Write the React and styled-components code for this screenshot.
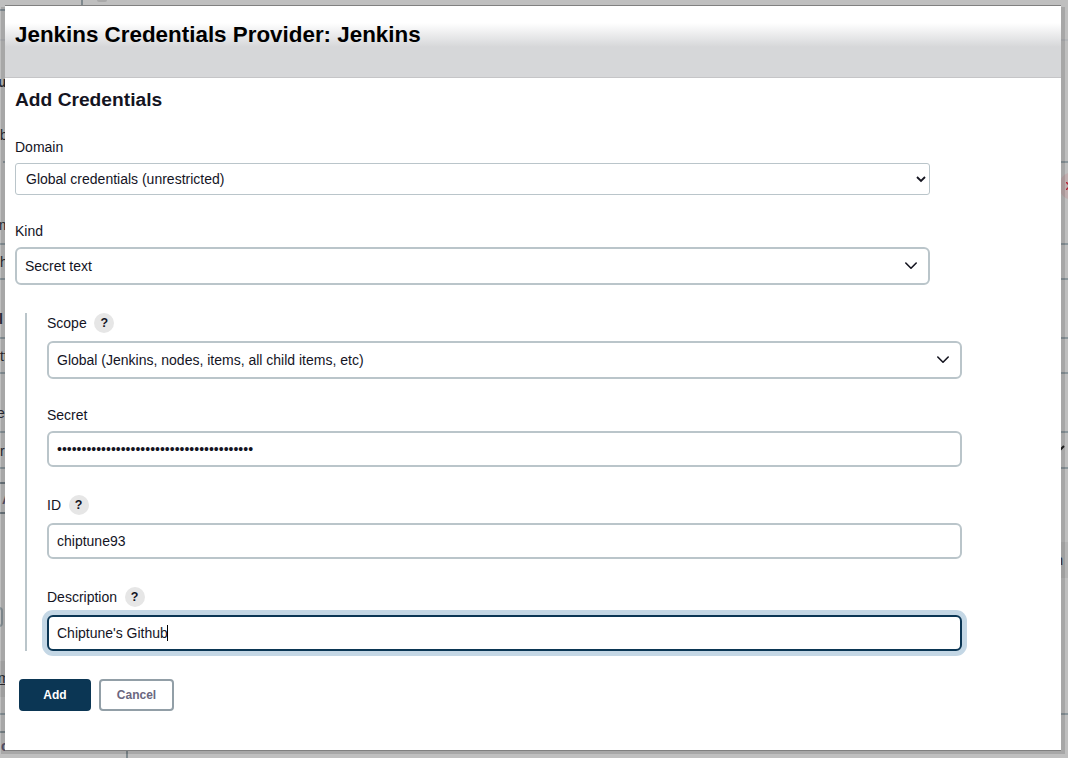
import React from "react";
import styled, { createGlobalStyle } from "styled-components";

const GlobalStyle = createGlobalStyle`
  * { box-sizing: border-box; }
  body {
    margin: 0;
    overflow: hidden;
    background: #bfbfbf;
    color: #14141f;
    font: 14px/20px "Liberation Sans", Arial, sans-serif;
  }
`;

const Screen = styled.div`
  position: relative;
  width: 1068px;
  height: 758px;
  overflow: hidden;
`;

/* Dimmed configuration page behind the dialog */
const Backdrop = styled.div`
  display: flex;
  flex-direction: column;
  height: 100%;
  color: #2b2b33;
`;

const TopStrip = styled.div`
  display: flex;
  align-items: flex-start;
  gap: 14px;
  height: 9px;
  padding-left: 81px;
`;

const TabEdge = styled.span`
  width: 2px;
  height: 9px;
  background: #7f898e;
`;

const TabDot = styled.span`
  width: 10px;
  height: 2px;
  background: #a9a9a9;
  border-radius: 0 0 5px 5px;
`;

const Rule = styled.div`
  flex: none;
  height: 2px;
  margin-left: ${(p) => p.$left || 0}px;
  margin-right: ${(p) => p.$right || 0}px;
  background: ${(p) => p.$color || "#8c979c"};
`;

const Slot = styled.div`
  flex: none;
  display: flex;
  justify-content: space-between;
  height: ${(p) => p.$h}px;
  margin-left: ${(p) => p.$left || 0}px;
  margin-right: ${(p) => p.$right || 0}px;
  background: ${(p) => p.$bg || "transparent"};
`;

const Glyph = styled.span`
  height: 20px;
  margin-top: ${(p) => p.$top}px;
  margin-left: ${(p) => p.$x || 0}px;
  margin-right: ${(p) => p.$r || 0}px;
  color: ${(p) => p.$color || "inherit"};
  font-weight: ${(p) => (p.$bold ? 700 : 400)};
  text-decoration: ${(p) => (p.$underline ? "underline" : "none")};
`;

const ButtonEdge = styled.span`
  width: 8px;
  height: 20px;
  margin: 29px 0 0 -5px;
  border: 2px solid #8c979c;
  border-radius: 4px;
`;

const DeleteDot = styled.span`
  display: flex;
  align-items: center;
  flex: none;
  width: 28px;
  height: 28px;
  margin: 9px -19px 0 0;
  padding-left: 7px;
  border-radius: 50%;
  background: #c1aeaf;
`;

const EdgeIcon = styled.svg`
  display: block;
  flex: none;
  margin-top: ${(p) => p.$top || 0}px;
  margin-right: ${(p) => p.$r || 0}px;
`;

const FooterTab = styled.div`
  width: 128px;
  height: 25px;
  padding: 3px 0 0 1px;
  border-right: 2px solid #7f898e;
  font-weight: 700;
  color: #5a5670;
`;

/* Dialog */
const Shade = styled.div`
  position: absolute;
  left: 1px;
  top: 7px;
  width: 1064px;
  height: 747px;
  background: rgba(0, 0, 0, 0.12);
`;

const Dialog = styled.section`
  position: absolute;
  left: 5px;
  top: 5px;
  width: 1056px;
  height: 746px;
  border: solid #808080;
  border-width: 1px 0;
  background: #fff;
`;

const DialogHeader = styled.header`
  height: 72px;
  padding: 15px 10px 0;
  border-bottom: 1px solid #c5c5c7;
  background: linear-gradient(#fff 0, #fff 17px, #d6d7d9 41px, #d6d7d9 100%);
`;

const DialogTitle = styled.h1`
  margin: 0;
  font-size: 22.4px;
  line-height: 28px;
  color: #000;
`;

const Body = styled.form`
  display: flex;
  flex-direction: column;
  padding: 9px 10px 0;
`;

const SectionTitle = styled.h2`
  margin: 0 0 24px;
  font-size: 19.2px;
  line-height: 26px;
`;

const Label = styled.div`
  display: flex;
  align-items: center;
  gap: 7.6px;
  height: 20px;
  margin-bottom: ${(p) => p.$gap ?? 6}px;
`;

const Help = styled.span`
  width: 20px;
  height: 20px;
  border-radius: 50%;
  background: #e6e6e6;
  font-size: 12.5px;
  font-weight: 700;
  text-align: center;
`;

const Field = styled.div`
  display: flex;
  align-items: center;
  width: 915px;
  height: ${(p) => p.$h}px;
  margin-bottom: ${(p) => p.$after || 0}px;
  padding: 0 8px;
  border: 2px solid ${(p) => (p.$focus ? "#0b3654" : "#bac5ca")};
  border-radius: 6px;
  background: #fff;
  box-shadow: ${(p) => (p.$focus ? "0 0 0 5px #c4d7e5" : "none")};
`;

const SelectField = styled(Field)`
  justify-content: space-between;
  padding-right: 9px;
`;

const NativeSelect = styled(SelectField)`
  padding: 0 3px 0 10px;
  border-width: 1px;
  border-radius: 3px;
`;

const Caret = styled.span`
  width: 1px;
  height: 16px;
  margin-left: -1px;
  background: #000;
`;

const Nested = styled.div`
  display: flex;
  flex-direction: column;
  width: 947px;
  margin-left: 10px;
  padding-left: 20px;
  border-left: 2px solid #bac5ca;
`;

const Actions = styled.div`
  display: flex;
  gap: 8px;
  margin: 28px 0 0 4px;
`;

const Button = styled.button`
  width: ${(p) => p.$w}px;
  height: 32px;
  padding: 0;
  border: 2px solid ${(p) => (p.$primary ? "#0b3654" : "#929fa7")};
  border-radius: 4px;
  background: ${(p) => (p.$primary ? "#0b3654" : "#fff")};
  color: ${(p) => (p.$primary ? "#fff" : "#6b6780")};
  font: 700 12px/16px "Liberation Sans", Arial, sans-serif;
`;

const Chevron = () => (
  <svg width="16" height="16" viewBox="0 0 16 16" fill="none" stroke="#14141f" strokeWidth="1.6" strokeLinecap="round" strokeLinejoin="round">
    <path d="M2.8 5L8 10.2l5.2-5.2" />
  </svg>
);

const NativeChevron = () => (
  <svg width="10" height="8" viewBox="0 0 10 8" fill="none" stroke="#14141f" strokeWidth="1.8">
    <path d="M1 2l4 4 4-4" />
  </svg>
);

function ConfigPage() {
  return (
    <Backdrop aria-hidden="true">
      <TopStrip><TabEdge /><TabDot /></TopStrip>
      <Rule $color="#89939a" $right={68} />
      <Slot $h={28} />
      <Rule $color="#b4b6b9" />
      <Slot $h={35} />
      <Slot $h={40}><Glyph $top={-4} $x={-2} $bold>u</Glyph></Slot>
      <Slot $h={45}><Glyph $top={9} $x={0}>b</Glyph></Slot>
      <Rule $left={3} />
      <Slot $h={40}>
        <span />
        <DeleteDot>
          <svg width="8" height="8" viewBox="0 0 8 8" stroke="#b51f32" strokeWidth="1.5">
            <path d="M0 0l8 8M8 0L0 8" />
          </svg>
        </DeleteDot>
      </Slot>
      <Slot $h={40}><Glyph $top={12} $x={-1}>m</Glyph></Slot>
      <Rule />
      <Slot $h={33}><Glyph $top={7} $x={0}>h</Glyph></Slot>
      <Rule />
      <Slot $h={57}><Glyph $top={29} $x={-1} $bold>l</Glyph></Slot>
      <Rule />
      <Slot $h={33}><Glyph $top={7}>tt</Glyph></Slot>
      <Rule />
      <Slot $h={57}><Glyph $top={29} $x={-3}>ec</Glyph></Slot>
      <Rule />
      <Slot $h={34}>
        <Glyph $top={8} $x={0}>r</Glyph>
        <EdgeIcon $top={12} $r={3} width="12" height="8" fill="none" stroke="#222" strokeWidth="2"><path d="M1 1l5 5 5-5" /></EdgeIcon>
      </Slot>
      <Rule />
      <Slot $h={13} />
      <Rule $color="#6f7980" $right={68} />
      <Slot $h={28}><Glyph $top={5} $x={2} $color="#5a5670" $bold>A</Glyph></Slot>
      <Rule $color="#6f7980" $right={68} />
      <Slot $h={28} />
      <Slot $h={36} $left={1000} $bg="#b5b5b5"><span /><Glyph $top={8} $r={5}>n</Glyph></Slot>
      <Slot $h={83}><ButtonEdge /></Slot>
      <Slot $h={36} $right={68} $bg="#b4b4b4"><Glyph $top={7} $x={-2} $underline>m</Glyph></Slot>
      <Slot $h={16} />
      <Rule />
      <Slot $h={16} />
      <Rule $color="#7f898e" $right={68} />
      <FooterTab>c</FooterTab>
    </Backdrop>
  );
}

export default function App() {
  return (
    <Screen>
      <GlobalStyle />
      <ConfigPage />
      <Shade />
      <Dialog role="dialog">
        <DialogHeader>
          <DialogTitle>Jenkins Credentials Provider: Jenkins</DialogTitle>
        </DialogHeader>
        <Body>
          <SectionTitle>Add Credentials</SectionTitle>
          <Label>Domain</Label>
          <NativeSelect $h={32} $after={26}>
            Global credentials (unrestricted)
            <NativeChevron />
          </NativeSelect>
          <Label>Kind</Label>
          <SelectField $h={38} $after={28}>
            Secret text
            <Chevron />
          </SelectField>
          <Nested>
            <Label $gap={8}>Scope <Help>?</Help></Label>
            <SelectField $h={38} $after={26}>
              Global (Jenkins, nodes, items, all child items, etc)
              <Chevron />
            </SelectField>
            <Label>Secret</Label>
            <Field $h={36} $after={28}>{"•".repeat(40)}</Field>
            <Label $gap={8}>ID <Help>?</Help></Label>
            <Field $h={36} $after={28}>chiptune93</Field>
            <Label $gap={8}>Description <Help>?</Help></Label>
            <Field $h={36} $focus>Chiptune's Github<Caret /></Field>
          </Nested>
          <Actions>
            <Button type="button" $primary $w={72}>Add</Button>
            <Button type="button" $w={75}>Cancel</Button>
          </Actions>
        </Body>
      </Dialog>
    </Screen>
  );
}
